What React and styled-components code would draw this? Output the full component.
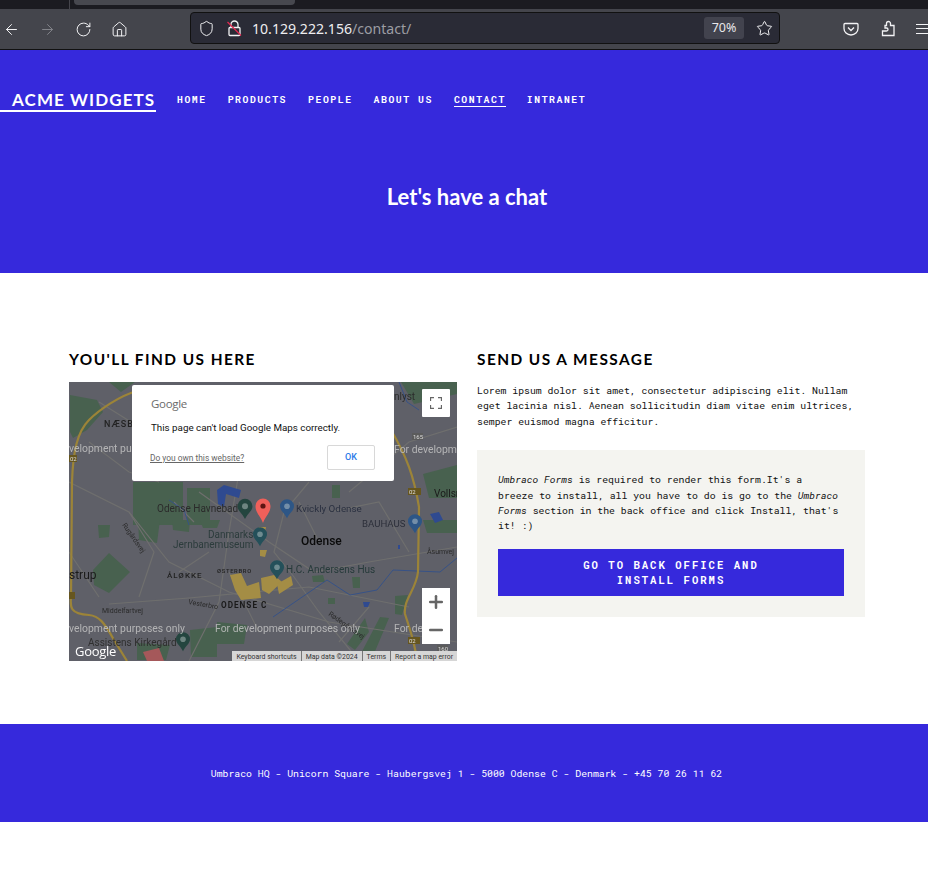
import React from 'react';
import styled, { createGlobalStyle } from 'styled-components';
import { ArrowLeft, ArrowRight, RotateCw, Home, Shield, Star, Plus, Minus } from 'lucide-react';

const BLUE = '#3629dc';
const MONO = '"Roboto Mono", "DejaVu Sans Mono", "Liberation Mono", monospace';

const GlobalStyle = createGlobalStyle`
  html, body {
    margin: 0;
    padding: 0;
    background: white;
    overflow: hidden;
  }
  body {
    width: 928px;
    height: 878px;
    font-family: "Liberation Mono", monospace;
  }
`;

const TabStrip = styled.div`
  height: 9px;
  background: #1b1b21;
  padding-left: 74px;
  position: relative;
  box-sizing: border-box;
`;

const TabSeparator = styled.div`
  position: absolute;
  left: 69px;
  top: 0;
  width: 1px;
  height: 9px;
  background: #45454c;
`;

const ActiveTab = styled.div`
  width: 221px;
  height: 5px;
  background: #47484f;
  border-radius: 0 0 4px 4px;
`;

const Toolbar = styled.div`
  height: 41px;
  box-sizing: border-box;
  background: #44454c;
  border-bottom: 1px solid #111;
  display: flex;
  align-items: center;
  color: #f3f3f5;
  overflow: hidden;
`;

const NavIcons = styled.div`
  width: 190px;
  flex: none;
  display: flex;
  align-items: center;
  gap: 19px;
  padding-left: 3px;
  box-sizing: border-box;
`;

const ToolIcon = styled.span`
  display: flex;
  width: 17px;
  height: 17px;
  color: ${p => (p.$dim ? '#83848a' : '#f3f3f5')};
`;

const UrlBar = styled.div`
  width: 590px;
  height: 32px;
  margin-top: -2px;
  flex: none;
  box-sizing: border-box;
  background: #2a2b36;
  border: 1px solid #111;
  border-radius: 4px;
  display: flex;
  align-items: center;
  padding: 0 6px 0 7px;
  font-family: "Noto Sans", sans-serif;
  font-size: 14.1px;
  line-height: 32px;
`;

const ShieldGap = styled.span`
  width: 11px;
  flex: none;
`;

const UrlHost = styled.span`
  margin-left: 9px;
  padding-top: 1px;
  color: #eeeef0;
`;

const UrlPath = styled.span`
  padding-top: 1px;
  color: #9c9da3;
  flex: 1;
`;

const Zoom = styled.span`
  width: 40px;
  height: 22px;
  background: #42434e;
  border-radius: 3px;
  color: #e8e8ea;
  font-size: 12.5px;
  line-height: 22px;
  text-align: center;
  margin-right: 12px;
`;

const RightIcons = styled.div`
  flex: none;
  display: flex;
  align-items: center;
  gap: 21px;
  padding-left: 63px;
  margin-top: -1px;
`;

const MenuLines = styled.span`
  width: 16px;
  height: 10px;
  flex: none;
  margin-left: -1px;
  border-top: 1px solid #f3f3f5;
  border-bottom: 1px solid #f3f3f5;
  box-sizing: border-box;
  position: relative;
  &::after {
    content: '';
    position: absolute;
    left: 0;
    right: 0;
    top: 3px;
    height: 1px;
    background: #f3f3f5;
  }
`;

const Hero = styled.header`
  height: 223px;
  background: ${BLUE};
  color: white;
  box-sizing: border-box;
  padding-top: 40px;
`;

const TopNav = styled.nav`
  display: flex;
  align-items: flex-start;
`;

const Logo = styled.a`
  font-family: Lato, sans-serif;
  font-weight: 700;
  font-size: 17px;
  line-height: 20px;
  letter-spacing: 1.1px;
  padding: 0 0 0 12px;
  width: 144px;
  height: 20px;
  border-bottom: 2px solid white;
  white-space: nowrap;
  color: white;
`;

const NavLinks = styled.div`
  display: flex;
  gap: 21px;
  margin-left: 21px;
`;

const NavLink = styled.a`
  font-family: ${MONO};
  font-weight: 700;
  font-size: 9.8px;
  letter-spacing: 1.54px;
  line-height: 13px;
  height: 13px;
  margin-top: 3px;
  white-space: nowrap;
  color: white;
  border-bottom: 1px solid ${p => (p.$active ? 'white' : 'transparent')};
`;

const HeroTitle = styled.h1`
  margin: 71px 0 0 6px;
  font-family: Lato, sans-serif;
  font-weight: 700;
  font-size: 22px;
  line-height: 28px;
  text-align: center;
`;

const Content = styled.main`
  display: grid;
  grid-template-columns: 388px 388px;
  column-gap: 20px;
  padding: 76px 0 0 69px;
  height: 451px;
  box-sizing: border-box;
`;

const Heading = styled.h2`
  margin: 0 0 13px;
  font-family: Lato, sans-serif;
  font-weight: 700;
  font-size: 15.4px;
  line-height: 20px;
  letter-spacing: 1.45px;
  color: #000;
`;

const Lead = styled.div`
  padding-top: 1px;
  margin-bottom: 21px;
  font-family: ${MONO};
  font-size: 9.8px;
  line-height: 15.4px;
  color: #111;
  white-space: nowrap;
`;

const FormBox = styled.div`
  width: 388px;
  height: 167px;
  box-sizing: border-box;
  background: #f4f4f0;
  padding: 22px 21px;
`;

const FormText = styled.p`
  margin: 0 0 15px;
  font-family: ${MONO};
  font-size: 9.8px;
  line-height: 15.4px;
  color: #111;
  white-space: nowrap;
`;

const InstallButton = styled.a`
  display: block;
  box-sizing: border-box;
  height: 47px;
  padding: 9px 0;
  background: ${BLUE};
  color: white;
  font-family: ${MONO};
  font-weight: 700;
  font-size: 10.6px;
  line-height: 15px;
  letter-spacing: 2px;
  text-align: center;
`;

const MapFrame = styled.div`
  position: relative;
  width: 388px;
  height: 279px;
  overflow: hidden;
  background: #5f6068;
`;

const MapSvg = styled.svg`
  display: block;
  font-family: Roboto, sans-serif;
  filter: blur(0.35px);
`;

const Dialog = styled.div`
  position: absolute;
  left: 63px;
  top: 3px;
  width: 262px;
  height: 96px;
  box-sizing: border-box;
  background: white;
  border-radius: 2px;
  padding: 12px 19px 0 19px;
  font-family: Roboto, sans-serif;
`;

const DialogLogo = styled.div`
  font-family: "Open Sans", sans-serif;
  font-size: 11.5px;
  line-height: 14px;
  letter-spacing: -0.3px;
  color: #6b6b6b;
`;

const DialogText = styled.div`
  margin-top: 10px;
  font-size: 9.8px;
  line-height: 13px;
  color: #111;
`;

const DialogRow = styled.div`
  margin-top: 11px;
  display: flex;
  justify-content: space-between;
  align-items: center;
`;

const OwnLink = styled.a`
  font-size: 8.4px;
  margin-left: -1px;
  color: #666;
  text-decoration: underline;
`;

const OkButton = styled.span`
  width: 48px;
  height: 25px;
  box-sizing: border-box;
  border: 1px solid #d8d8d8;
  border-radius: 2px;
  color: #2a7ae8;
  font-size: 9px;
  font-weight: 500;
  line-height: 23px;
  text-align: center;
`;

const FullscreenButton = styled.div`
  position: absolute;
  right: 7px;
  top: 7px;
  width: 28px;
  height: 28px;
  background: white;
  border-radius: 1px;
  display: flex;
  align-items: center;
  justify-content: center;
`;

const ZoomControl = styled.div`
  position: absolute;
  right: 7px;
  top: 206px;
  width: 28px;
  height: 56px;
  background: white;
  color: #666;
  display: flex;
  flex-direction: column;
  align-items: center;
  justify-content: space-around;
`;

const Attribution = styled.div`
  position: absolute;
  right: 0;
  bottom: 0;
  height: 10px;
  display: flex;
  background: #d6d6d6;
  font-family: Roboto, sans-serif;
  font-size: 6.95px;
  line-height: 12px;
  color: #333;
  white-space: nowrap;
`;

const AttributionItem = styled.span`
  padding: 0 4px;
  border-left: 1px solid #777;
  &:first-child {
    border-left: 0;
  }
`;

const Footer = styled.footer`
  height: 98px;
  background: ${BLUE};
  color: white;
  font-family: ${MONO};
  font-size: 9.8px;
  line-height: 100px;
  text-align: center;
  padding-left: 5px;
  white-space: nowrap;
`;

const greens = [
  'M1 13 L28 18 L34 30 L18 48 L4 56 L1 50Z',
  'M64 100 L114 100 L114 143 L64 143Z',
  'M118 106 L141 106 L141 143 L118 143Z',
  'M69 138 L91 138 L88 161 L70 158Z',
  'M29 143 L41 143 L40 155 L30 156Z',
  'M103 138 L121 138 L120 150 L104 148Z',
  'M131 138 L151 138 L148 146 L134 146Z',
  'M24 188 L40 171 L61 190 L40 211 L25 203Z',
  'M68 261 L101 263 L97 278 L68 278Z',
  'M121 248 L148 245 L148 275 L122 275Z',
  'M148 240 L178 243 L175 262 L148 262Z',
  'M283 195 L291 195 L291 206 L284 206Z',
  'M259 216 L266 216 L266 222 L259 222Z',
  'M243 194 L254 193 L256 200 L244 200Z',
  'M326 214 L339 213 L333 233 L326 232Z',
  'M296 236 L300 250 L286 268 L278 262Z',
  'M311 235 L320 236 L302 279 L288 279Z',
  'M354 138 L388 138 L388 151 L358 151Z',
  'M354 92 L388 83 L388 116 L360 116Z',
  'M263 103 L271 103 L271 116 L263 116Z',
  'M40 0 L66 0 L52 10Z',
  'M332 0 L388 0 L388 12 L345 22Z',
];

const minorRoads = [
  'M0 100 L60 130 L100 180 L160 210 L260 240 L388 260',
  'M40 222 L120 216 L240 205 L340 225',
  'M130 110 L200 160 L245 190 L300 180 L388 165',
  'M170 90 L160 150 L150 220 L120 279',
  'M240 100 L215 130 L205 170 L225 195 L250 230 L290 279',
  'M60 130 L85 170 L70 215',
  'M280 110 L340 60 L388 45',
  'M105 120 L125 140 M160 190 L190 250',
  'M20 60 L60 90 L90 100 M260 130 L310 120 L340 170',
  'M300 225 L270 260 M230 120 L250 160 M110 190 L140 170',
  'M30 20 L62 40 M0 170 L30 215',
];

const blueShapes = [
  'M148 108 L155 103 L172 108 L170 116 L157 112 L155 125 L149 122Z',
  'M294 220 L301 220 L299 225 L295 225Z',
  'M361 132 L370 130 L374 138 L366 141Z',
  'M329 163 L331 163 L331 167 L329 167Z',
];

const rivers = [
  'M204 235 L258 198 L281 213 L308 208 L324 188 L371 190 L388 176',
  'M120 143 L115 128 L100 118',
  'M330 0 L338 20 L350 28',
];

const yellowRoads = [
  'M68 9 C50 14 30 28 20 38 C8 50 4 70 3 100 L2 215 C1 225 1 232 20 233 C30 234 35 240 45 258 L58 279',
  'M322 48 C338 75 345 95 350 125 L349 190 C347 208 334 218 336 232 C340 245 346 260 348 279',
];

const oldTown = [
  'M161 193 L172 191 L178 204 L190 200 L192 216 L172 218 L166 208Z',
  'M192 196 L205 193 L213 200 L200 212 L193 208Z',
  'M208 202 L222 194 L224 203 L210 212Z',
  'M191 168 L198 168 L196 175 L191 174Z',
  'M190 145 L197 145 L196 150 L190 150Z',
];

const watermarks = [
  { x: 0, y: 70, text: 'velopment purposes only' },
  { x: 325, y: 71, text: 'For developm' },
  { x: 0, y: 250, text: 'velopment purposes only' },
  { x: 146, y: 250, text: 'For development purposes only' },
  { x: 325, y: 250, text: 'For de' },
];

const labels = [
  { x: 35, y: 45, size: 9, weight: 500, fill: '#222', spacing: 1, text: 'NÆSBY' },
  { x: 88, y: 130, size: 10, fill: '#2b2b2b', text: 'Odense Havnebad' },
  { x: 227, y: 130, size: 9.8, fill: '#2a3040', text: 'Kvickly Odense' },
  { x: 139, y: 156, size: 10, fill: '#2c3c3c', text: 'Danmarks' },
  { x: 104, y: 166, size: 10, fill: '#2c3c3c', text: 'Jernbanemuseum' },
  { x: 293, y: 145, size: 9.6, fill: '#2c2f3a', text: 'BAUHAUS' },
  { x: 232, y: 163, size: 12, weight: 500, fill: '#0a0a0a', text: 'Odense' },
  { x: 217, y: 191, size: 10, fill: '#263a3a', text: 'H.C. Andersens Hus' },
  { x: 0, y: 197, size: 12, fill: '#1a1a1a', text: 'strup' },
  { x: 98, y: 196, size: 8, weight: 500, fill: '#222', spacing: 1, text: 'ÅLØKKE' },
  { x: 148, y: 191, size: 5.8, weight: 500, fill: '#222', spacing: 0.7, text: 'ØSTERBRO' },
  { x: 152, y: 226, size: 8.2, weight: 700, fill: '#1a1a1a', spacing: 1, text: 'ODENSE C' },
  { x: 33, y: 231, size: 7, fill: '#2a2a2a', text: 'Middelfartvej' },
  { x: 19, y: 264, size: 10, fill: '#2f2f2f', text: 'Assistens Kirkegård' },
  { x: 365, y: 115, size: 10, fill: '#1a1a1a', text: 'Vollsm' },
  { x: 325, y: 18, size: 10, fill: '#2b2b2b', text: 'nlyst' },
  { x: 358, y: 172, size: 7, fill: '#2a2a2a', text: 'Åsumvej' },
];

const rotatedLabels = [
  { x: 119, y: 222, angle: 10, text: 'Vesterbro' },
  { x: 53, y: 143, angle: 55, text: 'Rugårdsvej' },
  { x: 259, y: 233, angle: 35, text: 'Rødegårdsvej' },
];

const shields = [
  { x: 343, y: 51, w: 11, fill: '#5b5b5b', text: '165' },
  { x: 339, y: 106, w: 13, fill: '#66561f', text: '02' },
  { x: 0, y: 73, w: 8, fill: '#66561f', text: '02' },
  { x: 0, y: 210, w: 6, fill: '#66561f', text: '' },
  { x: 339, y: 255, w: 12, fill: '#66561f', text: '02' },
  { x: 368, y: 263, w: 11, fill: '#5b5b5b', text: '160' },
];

const pins = [
  { x: 176, y: 125, fill: '#24453f', r: 7.5 },
  { x: 191, y: 153, fill: '#24505a', r: 7 },
  { x: 208, y: 186, fill: '#24505a', r: 7 },
  { x: 218, y: 125, fill: '#2d5686', r: 7 },
  { x: 346, y: 140, fill: '#2d5686', r: 7 },
  { x: 114, y: 258, fill: '#24453f', r: 7 },
];

const Pin = ({ x, y, fill, r }) => (
  <g>
    <path d={`M${x} ${y + r * 1.6} C${x - r * 0.4} ${y + r * 0.8} ${x - r} ${y + r * 0.5} ${x - r} ${y - r * 0.1} A${r} ${r} 0 1 1 ${x + r} ${y - r * 0.1} C${x + r} ${y + r * 0.5} ${x + r * 0.4} ${y + r * 0.8} ${x} ${y + r * 1.6}Z`} fill={fill} />
    <circle cx={x} cy={y - r * 0.1} r={r * 0.4} fill="#c9d3d3" opacity="0.45" />
  </g>
);

const MapDrawing = () => (
  <MapSvg width="388" height="279" viewBox="0 0 388 279">
    <rect width="388" height="279" fill="#5f6068" />
    {greens.map(d => <path key={d} d={d} fill="#48614f" />)}
    <path d="M74 270 L90 266 L95 279 L78 279Z" fill="#a5585a" />
    {minorRoads.map(d => <path key={d} d={d} fill="none" stroke="#6f6f6e" strokeWidth="1.2" />)}
    {rivers.map(d => <path key={d} d={d} fill="none" stroke="#32508a" strokeWidth="0.9" />)}
    {blueShapes.map(d => <path key={d} d={d} fill="#2f4a90" />)}
    {oldTown.map(d => <path key={d} d={d} fill="#a48d45" />)}
    {yellowRoads.map(d => <path key={d} d={d} fill="none" stroke="#9c8438" strokeWidth="2.2" />)}
    {shields.map(s => (
      <g key={`${s.x}-${s.y}`}>
        <rect x={s.x} y={s.y} width={s.w} height="7" fill={s.fill} />
        <text x={s.x + 1} y={s.y + 6} fontSize="6" fill="#ddd">{s.text}</text>
      </g>
    ))}
    {labels.map(l => (
      <text key={l.text} x={l.x} y={l.y} fontSize={l.size} fontWeight={l.weight || 400} fill={l.fill} letterSpacing={l.spacing || 0}>{l.text}</text>
    ))}
    {rotatedLabels.map(l => (
      <text key={l.text} fontSize="7" fill="#2a2a2a" transform={`translate(${l.x} ${l.y}) rotate(${l.angle})`}>{l.text}</text>
    ))}
    {pins.map(p => <Pin key={`${p.x}-${p.y}`} {...p} />)}
    <path d="M194 141 C191 133 186.500 131 186.500 124 A7.500 7.500 0 1 1 201.500 124 C201.500 131 197 133 194 141Z" fill="#f0605a" />
    <circle cx="194" cy="124" r="2.600" fill="#5e1512" />
    {watermarks.map(w => (
      <text key={`${w.x}-${w.y}`} x={w.x} y={w.y} fontSize="10.400" fill="#c3c3c3" opacity="0.85">{w.text}</text>
    ))}
    <text x="6" y="274" fontSize="13" fontWeight="500" fill="white" letterSpacing="-0.3" fontFamily="Open Sans">Google</text>
  </MapSvg>
);

const PocketIcon = () => (
  <svg width="16" height="16" viewBox="0 0 16 16" fill="none" stroke="#f3f3f5" strokeWidth="1.3">
    <path d="M2 2.500 H14 C14.600 2.500 15 2.900 15 3.500 V7.500 C15 11 12 14 8 14 C4 14 1 11 1 7.500 V3.500 C1 2.900 1.400 2.500 2 2.500Z" />
    <path d="M5 6.500 L8 9.500 L11 6.500" />
  </svg>
);

const ExtensionIcon = () => (
  <svg width="16" height="17" viewBox="0 0 16 17" fill="none" stroke="#f3f3f5" strokeWidth="1.3">
    <path d="M2.500 15.500 H14 V5.500 H10.500 V3.500 A2 2 0 0 0 6.500 3.500 V5.500 H5 V8 H6.500 A1.500 1.500 0 0 1 6.500 11 H2.500Z" />
  </svg>
);

const LockIcon = () => (
  <svg width="17" height="17" viewBox="0 0 17 17" fill="none">
    <path d="M5 8 V5.500 A3.500 3.500 0 0 1 12 5.500 V8" stroke="#f3f3f5" strokeWidth="1.300" transform="translate(0 -1)" />
    <rect x="3" y="7.500" width="11" height="8" rx="1" stroke="#f3f3f5" strokeWidth="1.300" />
    <path d="M1.500 2 L15 15.500" stroke="#e22850" strokeWidth="1.300" />
  </svg>
);

const FullscreenIcon = () => (
  <svg width="12" height="12" viewBox="0 0 12 12" fill="none" stroke="#666" strokeWidth="1.300">
    <path d="M0.500 4 V0.500 H4 M8 0.500 H11.500 V4 M11.500 8 V11.500 H8 M4 11.500 H0.500 V8" />
  </svg>
);

const lorem = ['Lorem ipsum dolor sit amet, consectetur adipiscing elit. Nullam', 'eget lacinia nisl. Aenean sollicitudin diam vitae enim ultrices,', 'semper euismod magna efficitur.'];
const links = ['HOME', 'PRODUCTS', 'PEOPLE', 'ABOUT US', 'CONTACT', 'INTRANET'];

export default function App() {
  return (
    <>
      <GlobalStyle />
      <TabStrip>
        <TabSeparator />
        <ActiveTab />
      </TabStrip>
      <Toolbar>
        <NavIcons>
          <ToolIcon><ArrowLeft size={17} strokeWidth={1.4} /></ToolIcon>
          <ToolIcon $dim><ArrowRight size={17} strokeWidth={1.4} /></ToolIcon>
          <ToolIcon><RotateCw size={17} strokeWidth={1.4} /></ToolIcon>
          <ToolIcon><Home size={17} strokeWidth={1.4} /></ToolIcon>
        </NavIcons>
        <UrlBar>
          <ToolIcon><Shield size={17} strokeWidth={1.4} /></ToolIcon>
          <ShieldGap />
          <LockIcon />
          <UrlHost>10.129.222.156</UrlHost>
          <UrlPath>/contact/</UrlPath>
          <Zoom>70%</Zoom>
          <ToolIcon><Star size={17} strokeWidth={1.4} /></ToolIcon>
        </UrlBar>
        <RightIcons>
          <PocketIcon />
          <ExtensionIcon />
          <MenuLines />
        </RightIcons>
      </Toolbar>
      <Hero>
        <TopNav>
          <Logo>ACME WIDGETS</Logo>
          <NavLinks>
            {links.map(l => <NavLink key={l} $active={l === 'CONTACT'}>{l}</NavLink>)}
          </NavLinks>
        </TopNav>
        <HeroTitle>Let's have a chat</HeroTitle>
      </Hero>
      <Content>
        <section>
          <Heading>YOU'LL FIND US HERE</Heading>
          <MapFrame>
            <MapDrawing />
            <Dialog>
              <DialogLogo>Google</DialogLogo>
              <DialogText>This page can't load Google Maps correctly.</DialogText>
              <DialogRow>
                <OwnLink>Do you own this website?</OwnLink>
                <OkButton>OK</OkButton>
              </DialogRow>
            </Dialog>
            <FullscreenButton><FullscreenIcon /></FullscreenButton>
            <ZoomControl>
              <Plus size={20} strokeWidth={3} />
              <Minus size={20} strokeWidth={3} />
            </ZoomControl>
            <Attribution>
              <AttributionItem>Keyboard shortcuts</AttributionItem>
              <AttributionItem>Map data ©2024</AttributionItem>
              <AttributionItem>Terms</AttributionItem>
              <AttributionItem>Report a map error</AttributionItem>
            </Attribution>
          </MapFrame>
        </section>
        <section>
          <Heading>SEND US A MESSAGE</Heading>
          <Lead>{lorem.map(line => <div key={line}>{line}</div>)}</Lead>
          <FormBox>
            <FormText>
              <em>Umbraco Forms</em> is required to render this form.It's a<br />
              breeze to install, all you have to do is go to the <em>Umbraco</em><br />
              <em>Forms</em> section in the back office and click Install, that's<br />
              it! :)
            </FormText>
            <InstallButton>GO TO BACK OFFICE AND<br />INSTALL FORMS</InstallButton>
          </FormBox>
        </section>
      </Content>
      <Footer>Umbraco HQ - Unicorn Square - Haubergsvej 1 - 5000 Odense C - Denmark - +45 70 26 11 62</Footer>
    </>
  );
}
